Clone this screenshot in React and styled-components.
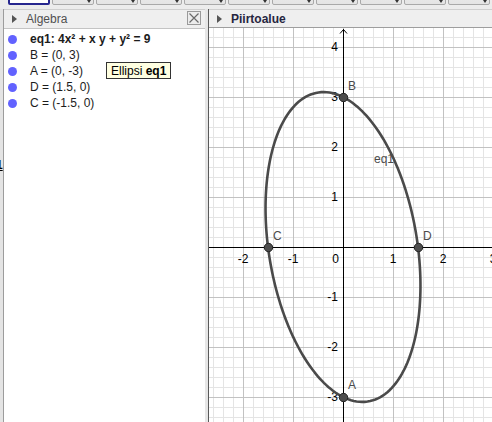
import React from "react";
import styled, { createGlobalStyle } from "styled-components";

const Global = createGlobalStyle`
  html, body { margin: 0; padding: 0; background: #e8e8e8; }
  body { font-family: "Liberation Sans", Arial, sans-serif; }
  #root { width: 492px; height: 422px; overflow: hidden; }
`;

const Page = styled.div`
  width: 492px;
  height: 422px;
  display: flex;
  flex-direction: column;
  background: #e8e8e8;
  overflow: hidden;
`;

const Toolbar = styled.div`
  height: 9px;
  flex-shrink: 0;
  display: flex;
  align-items: flex-end;
  gap: 2px;
  padding-left: 8px;
  overflow: hidden;
  background: #ececec;
`;

const ToolButton = styled.div`
  position: relative;
  flex-shrink: 0;
  width: 42px;
  height: 30px;
  margin-bottom: 4px;
  box-sizing: border-box;
  border: ${(p) => (p.$active ? "2px solid #27278f" : "1px solid #a9a9a9")};
  border-radius: 2px;
  background: ${(p) => (p.$active ? "#ffffff" : "linear-gradient(#fafafa, #e4e4e4)")};
  &::after {
    content: "";
    position: absolute;
    right: 2px;
    bottom: 1px;
    border-left: 2px solid transparent;
    border-right: 2px solid transparent;
    border-top: 3px solid #333;
    display: ${(p) => (p.$active ? "none" : "block")};
  }
`;

const Main = styled.div`
  flex: 1;
  display: flex;
  min-height: 0;
`;

const LeftEdge = styled.div`
  width: 3px;
  flex-shrink: 0;
  background: #e4e4e4;
  border-right: 1px solid #9c9c9c;
  position: relative;
  overflow: hidden;
`;

const EdgeGlyph = styled.span`
  position: absolute;
  left: -4px;
  top: ${(p) => p.$top}px;
  font-size: 12px;
  line-height: 12px;
  color: ${(p) => p.$color};
  text-decoration: ${(p) => (p.$underline ? "underline" : "none")};
  font-weight: bold;
`;

const AlgebraPanel = styled.div`
  width: 201px;
  flex-shrink: 0;
  display: flex;
  flex-direction: column;
  position: relative;
`;

const Header = styled.div`
  height: ${(p) => p.$h}px;
  flex-shrink: 0;
  display: flex;
  align-items: center;
  padding-left: 8px;
  background: #efefef;
  border-top: 1px solid #cfcfcf;
  border-bottom: 1px solid ${(p) => p.$line};
  position: relative;
`;

const Triangle = styled.span`
  width: 0;
  height: 0;
  border-top: 4px solid transparent;
  border-bottom: 4px solid transparent;
  border-left: 5px solid #555;
  margin-right: 9px;
`;

const Title = styled.span`
  font-size: 12px;
  color: ${(p) => p.$color};
  font-weight: ${(p) => (p.$bold ? "bold" : "normal")};
`;

const CloseBox = styled.div`
  position: absolute;
  right: 4px;
  top: 1px;
  width: 14px;
  height: 14px;
  box-sizing: border-box;
  border: 1px solid #9a9a9a;
  background: #ececec;
  display: flex;
  align-items: center;
  justify-content: center;
`;

const AlgebraList = styled.div`
  flex: 1;
  background: #ffffff;
  padding-top: 2px;
  display: flex;
  flex-direction: column;
`;

const Row = styled.div`
  height: 16px;
  display: flex;
  align-items: center;
  padding-left: 4px;
  gap: 13px;
  font-size: 12px;
  color: #1c1c1c;
  font-weight: ${(p) => (p.$bold ? "bold" : "normal")};
  white-space: nowrap;
`;

const Dot = styled.span`
  width: 9px;
  height: 9px;
  border-radius: 50%;
  background: #6262ff;
  flex-shrink: 0;
`;

const Tooltip = styled.div`
  position: absolute;
  left: 102px;
  top: 53px;
  height: 17px;
  box-sizing: border-box;
  padding: 0 4px;
  display: flex;
  align-items: center;
  background: #ffffe1;
  border: 1px solid #333;
  font-size: 12px;
  color: #000;
  white-space: nowrap;
`;

const Splitter = styled.div`
  width: 3px;
  flex-shrink: 0;
  background: #e6e6e6;
`;

const GraphicsPanel = styled.div`
  flex: 1;
  display: flex;
  flex-direction: column;
  border-left: 1px solid #5a5a5a;
  min-width: 0;
`;

const Canvas = styled.div`
  flex: 1;
  background: #ffffff;
  overflow: hidden;
`;

const W = 283;
const H = 394;
const OX = 134;
const OY = 219;
const S = 50;

function Grid() {
  const minor = [];
  const major = [];
  for (let x = OX % 10; x <= W; x += 10) {
    const isMajor = Math.round(x - OX) % 50 === 0;
    (isMajor ? major : minor).push(
      <line key={"v" + x} x1={x + 0.5} y1={0} x2={x + 0.5} y2={H}
        stroke={isMajor ? "#c2c2c2" : "#e4e4e4"} strokeWidth="1" />
    );
  }
  for (let y = OY % 10; y <= H; y += 10) {
    const isMajor = Math.round(y - OY) % 50 === 0;
    (isMajor ? major : minor).push(
      <line key={"h" + y} x1={0} y1={y + 0.5} x2={W} y2={y + 0.5}
        stroke={isMajor ? "#c2c2c2" : "#e4e4e4"} strokeWidth="1" />
    );
  }
  return <g>{minor}{major}</g>;
}

function ellipsePath() {
  const pts = [];
  for (let i = 0; i <= 360; i++) {
    const t = (i / 360) * Math.PI * 2;
    const c = Math.cos(t), s = Math.sin(t);
    const r = 3 / Math.sqrt(4 * c * c + c * s + s * s);
    const x = OX + S * r * c;
    const y = OY - S * r * s;
    pts.push((i === 0 ? "M" : "L") + x.toFixed(2) + " " + y.toFixed(2));
  }
  return pts.join(" ") + " Z";
}

function Graph() {
  const xLabels = [-2, -1, 1, 2, 3];
  const yLabels = [4, 3, 2, 1, -1, -2, -3];
  const pts = [
    { n: "B", x: 0, y: 3, lx: 139, ly: 62 },
    { n: "A", x: 0, y: -3, lx: 139, ly: 361 },
    { n: "C", x: -1.5, y: 0, lx: 64, ly: 212 },
    { n: "D", x: 1.5, y: 0, lx: 214, ly: 212 },
  ];
  return (
    <svg width={W} height={H} viewBox={`0 0 ${W} ${H}`} style={{ display: "block" }}>
      <Grid />
      <line x1={0} y1={OY + 0.5} x2={W} y2={OY + 0.5} stroke="#000" strokeWidth="1" />
      <line x1={OX + 0.5} y1={1} x2={OX + 0.5} y2={H} stroke="#000" strokeWidth="1" />
      <path d={`M${OX - 3} ${5.5} L${OX + 0.5} 1.5 L${OX + 4} 5.5`} fill="none" stroke="#000" strokeWidth="1" />
      <g fontFamily="'Liberation Sans', Arial, sans-serif" fontSize="12" fill="#000">
        {xLabels.map((v) => (
          <text key={"x" + v} x={OX + v * S} y={OY + 16} textAnchor="middle">{String(v)}</text>
        ))}
        <text x={OX - 4} y={OY + 16} textAnchor="end">0</text>
        {yLabels.map((v) => (
          <text key={"y" + v} x={OX - 5} y={OY - v * S + 4} textAnchor="end">{String(v)}</text>
        ))}
      </g>
      <path d={ellipsePath()} fill="none" stroke="#4a4a4a" strokeWidth="2.6" />
      {pts.map((p) => (
        <circle key={p.n} cx={OX + p.x * S + 0.5} cy={OY - p.y * S + 0.5} r="4.2"
          fill="#4d4d4d" stroke="#262626" strokeWidth="1" />
      ))}
      <g fontFamily="'Liberation Sans', Arial, sans-serif" fontSize="12" fill="#4a4a4a">
        {pts.map((p) => (
          <text key={"l" + p.n} x={p.lx} y={p.ly}>{p.n}</text>
        ))}
        <text x={165} y={135}>eq1</text>
      </g>
    </svg>
  );
}

const rows = [
  { t: "eq1: 4x² + x y + y² = 9", bold: true },
  { t: "B = (0, 3)" },
  { t: "A = (0, -3)" },
  { t: "D = (1.5, 0)" },
  { t: "C = (-1.5, 0)" },
];

export default function App() {
  return (
    <Page>
      <Global />
      <Toolbar>
        {Array.from({ length: 12 }).map((_, i) => (
          <ToolButton key={i} $active={i === 0} />
        ))}
      </Toolbar>
      <Main>
        <LeftEdge>
          <EdgeGlyph $top={118} $color="#3a6fd0">(</EdgeGlyph>
          <EdgeGlyph $top={150} $color="#000" $underline>1</EdgeGlyph>
        </LeftEdge>
        <AlgebraPanel>
          <Header $h={18} $line="#c4c4c4">
            <Triangle />
            <Title $color="#505050">Algebra</Title>
            <CloseBox>
              <svg width="12" height="12" viewBox="0 0 12 12">
                <path d="M1.5 1.5 L10.5 10.5 M10.5 1.5 L1.5 10.5" stroke="#6a6a6a" strokeWidth="1.2" />
              </svg>
            </CloseBox>
          </Header>
          <AlgebraList>
            {rows.map((r) => (
              <Row key={r.t} $bold={r.bold}>
                <Dot />
                <span>{r.t}</span>
              </Row>
            ))}
          </AlgebraList>
          <Tooltip>
            Ellipsi&nbsp;<b>eq1</b>
          </Tooltip>
        </AlgebraPanel>
        <Splitter />
        <GraphicsPanel>
          <Header $h={17} $line="#9e9e9e">
            <Triangle />
            <Title $color="#262640" $bold>Piirtoalue</Title>
          </Header>
          <Canvas>
            <Graph />
          </Canvas>
        </GraphicsPanel>
      </Main>
    </Page>
  );
}
